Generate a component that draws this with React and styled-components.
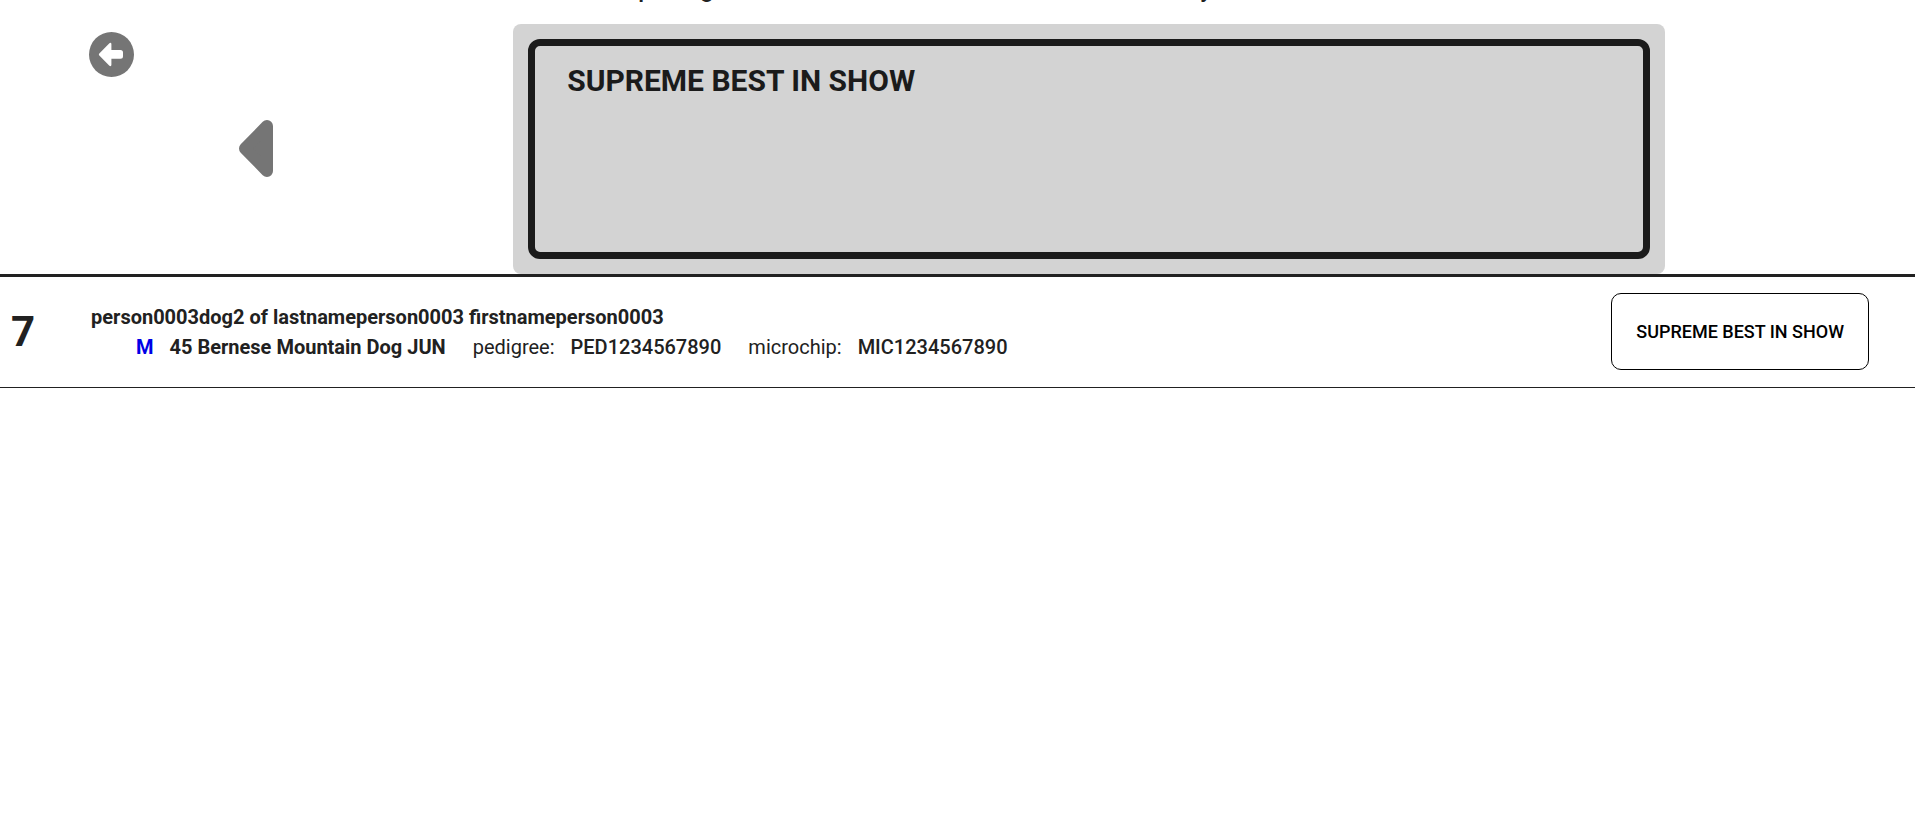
import React, { useState } from 'react';
import styled, { createGlobalStyle } from 'styled-components';

const entries = [
  {
    number: 7,
    name: 'person0003dog2 of lastnameperson0003 firstnameperson0003',
    sex: 'M',
    breed: '45 Bernese Mountain Dog JUN',
    pedigree: 'PED1234567890',
    microchip: 'MIC1234567890',
  },
];

const title = 'SUPREME BEST IN SHOW';

function App() {
  const [selected, setSelected] = useState(null);

  return (
    <Page>
      <GlobalStyle />
      <ScrolledHeading>
        <span>p</span>
        <span>g</span>
        <span>y</span>
      </ScrolledHeading>
      <TopArea>
        <Navigation>
          <IconButton type="button" aria-label="Back">
            <svg width="45" height="45" viewBox="0 0 45 45">
              <circle cx="22.5" cy="22.5" r="22.5" fill="#757575" />
              <path
                d="M10.3 21.4 L20.4 11.3 Q22.3 10 22.4 12.2 V18 H31.5 Q34 18 34 20.5 V24.3 Q34 26.8 31.5 26.8 H22.4 V32.8 Q22.3 35 20.4 33.7 L10.3 23.6 Q9.3 22.5 10.3 21.4 Z"
                fill="#fff"
              />
            </svg>
          </IconButton>
          <PreviousButton type="button" aria-label="Previous">
            <svg width="34" height="57" viewBox="0 0 34 57">
              <path d="M28 6 V51 L6 28.5 Z" fill="#757575" stroke="#757575" strokeWidth="12" strokeLinejoin="round" />
            </svg>
          </PreviousButton>
        </Navigation>
        <Panel>
          <PanelFrame>
            <Title>{title}</Title>
          </PanelFrame>
        </Panel>
      </TopArea>
      <List>
        {entries.map(entry => (
          <Row key={entry.number}>
            <Number>{entry.number}</Number>
            <Info>
              <Name>{entry.name}</Name>
              <Details>
                <Sex>{entry.sex}</Sex>
                <Breed>{entry.breed}</Breed>
                <Field>
                  pedigree: <Value>{entry.pedigree}</Value>
                </Field>
                <Field>
                  microchip: <Value>{entry.microchip}</Value>
                </Field>
              </Details>
            </Info>
            <AwardButton
              type="button"
              aria-pressed={selected === entry.number}
              onClick={() => setSelected(entry.number)}
            >
              {title}
            </AwardButton>
          </Row>
        ))}
      </List>
    </Page>
  );
}

export default App;

const GlobalStyle = createGlobalStyle`
  * {
    box-sizing: border-box;
  }
  body {
    margin: 0;
    background: #fff;
    color: #212121;
    font-family: Roboto, sans-serif;
  }
`

const Page = styled.main`
  min-height: 100vh;
`

// heading is scrolled out, only its last pixels stay on screen
const ScrolledHeading = styled.div`
  display: grid;
  grid-template-columns: 62px 500px 1fr;
  align-content: end;
  height: 4px;
  margin-bottom: 20px;
  padding-left: calc(100% / 3);
  overflow: hidden;
  font-size: 24px;
  line-height: 30px;
  font-weight: 500;
`

const TopArea = styled.div`
  display: grid;
  grid-template-columns: 41fr 92fr 20fr;
  border-bottom: 3px solid #212121;
`

const Navigation = styled.nav`
  display: flex;
  flex-direction: column;
  align-items: flex-start;
  padding: 8px 0 0 89px;
`

const IconButton = styled.button`
  padding: 0;
  border: 0;
  background: none;
  cursor: pointer;

  svg {
    display: block;
  }
`

const PreviousButton = styled(IconButton)`
  margin: 43px 0 0 150px;
`

const Panel = styled.section`
  padding: 15px;
  border-radius: 8px;
  background: #d3d3d3;
`

const PanelFrame = styled.div`
  min-height: 220px;
  padding: 17px 32px;
  border: 7px solid #1b1b1b;
  border-radius: 12px;
`

const Title = styled.h1`
  margin: 0;
  color: #1b1b1b;
  font-size: 30px;
  line-height: 36px;
  font-weight: 700;
`

const List = styled.ul`
  margin: 0;
  padding: 0;
  list-style: none;
`

const Row = styled.li`
  display: flex;
  align-items: center;
  padding: 16px 46px 17px 11px;
  border-bottom: 1px solid #212121;
`

const Number = styled.strong`
  width: 80px;
  font-size: 42px;
  line-height: 48px;
`

const Info = styled.div`
  flex: 1;
  font-size: 20px;
  line-height: 30px;
`

const Name = styled.div`
  font-weight: 700;
`

const Details = styled.div`
  display: flex;
  flex-wrap: wrap;
  padding-left: 45px;
`

const Sex = styled.span`
  margin-right: 16px;
  color: #0000e6;
  font-weight: 700;
`

const Breed = styled.span`
  font-weight: 700;
`

const Field = styled.span`
  display: flex;
  gap: 16px;
  margin-left: 27px;
`

const Value = styled.span`
  font-weight: 500;
`

const AwardButton = styled.button`
  height: 77px;
  padding: 0 24px;
  border: 1px solid #000;
  border-radius: 10px;
  background: #fff;
  color: #000;
  font-family: inherit;
  font-size: 18px;
  line-height: 24px;
  font-weight: 500;
  cursor: pointer;
`
